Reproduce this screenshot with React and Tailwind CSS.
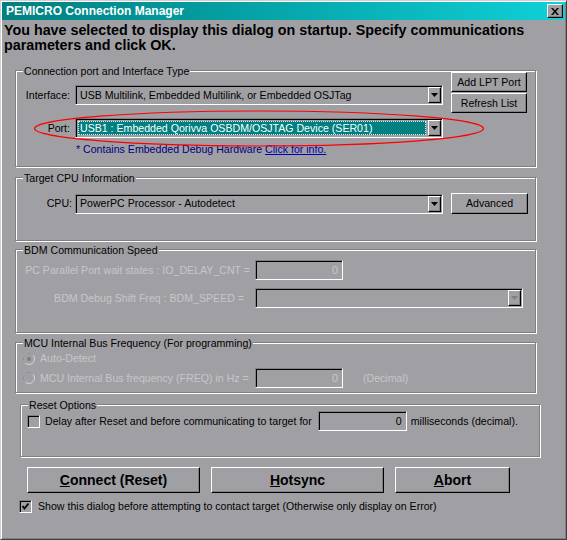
import React from "react";

const RAISED =
  "border border-t-white border-l-white border-r-black border-b-black shadow-[inset_-1px_-1px_0_#808080]";
const SUNKEN =
  "border border-t-[#808080] border-l-[#808080] border-r-white border-b-white shadow-[inset_1px_1px_0_#000]";
const FRAME =
  "border border-[#808080] shadow-[inset_1px_1px_0_#fff,1px_1px_0_#fff]";
const DIS = "text-[#c6c6ca]";

const Arrow = ({ disabled }) => (
  <svg width="7" height="4" viewBox="0 0 7 4">
    <path d="M0 0h7L3.5 4z" fill={disabled ? "#808080" : "#000"} />
  </svg>
);

const DropBtn = ({ disabled }) => (
  <div
    className={`w-[13px] h-full flex items-center justify-center bg-[#a0a0a4] ${RAISED}`}
  >
    <Arrow disabled={disabled} />
  </div>
);

const Combo = ({ className = "", children, selected, disabled }) => (
  <div className={`flex h-[20px] p-[1px] ${SUNKEN} ${className}`}>
    <div className="flex-1 min-w-0 flex items-center pl-[1px] pr-[2px]">
      {selected ? (
        <div className="flex-1 h-[14px] flex items-center bg-[#008080] text-white border border-dotted border-[#e8e8e8] pl-[1px] whitespace-nowrap">
          {children}
        </div>
      ) : (
        <span className="pl-[2px] whitespace-nowrap">{children}</span>
      )}
    </div>
    <DropBtn disabled={disabled} />
  </div>
);

const Field = ({ className = "", children }) => (
  <div
    className={`h-[20px] flex items-center justify-end pr-[4px] ${SUNKEN} ${className}`}
  >
    {children}
  </div>
);

const Legend = ({ children }) => (
  <span className="block w-fit -mt-[6px] ml-[7px] px-[1px] bg-[#a0a0a4] whitespace-nowrap">
    {children}
  </span>
);

const Radio = ({ checked }) => (
  <svg width="12" height="12" viewBox="0 0 12 12" className="shrink-0">
    <circle cx="6" cy="6" r="5.5" fill="none" stroke="#d4d4d8" />
    <path
      d="M9.89 2.11A5.5 5.5 0 0 0 2.11 9.89"
      fill="none"
      stroke="#84848a"
    />
    {checked && <circle cx="6" cy="6" r="2" fill="#7c7c80" />}
  </svg>
);

const Check = ({ checked }) => (
  <div
    className={`w-[13px] h-[13px] shrink-0 flex items-center justify-center ${SUNKEN}`}
  >
    {checked && (
      <svg width="9" height="9" viewBox="0 0 9 9">
        <polyline
          points="1.5,4 3.5,6.5 7.5,1.5"
          fill="none"
          stroke="#000"
          strokeWidth="1.8"
        />
      </svg>
    )}
  </div>
);

const Btn = ({ className = "", children }) => (
  <button
    className={`flex items-center justify-center bg-[#a0a0a4] ${RAISED} ${className}`}
  >
    {children}
  </button>
);

export default function App() {
  return (
    <div className="w-[567px] h-[540px] overflow-hidden">
      <div className="relative w-[567px] h-[540px] bg-[#a0a0a4] border border-t-[#d0d0d0] border-l-[#d0d0d0] border-r-[#404040] border-b-[#404040] shadow-[inset_1px_1px_0_#fff,inset_-1px_-1px_0_#808080] p-[1px] text-[10.6px] leading-[13px] text-black font-['Liberation_Sans',Arial,sans-serif]">
        {/* Title bar */}
        <div className="h-[18px] flex items-center bg-linear-to-r from-[#008080] to-[#10d0d8] pl-[4px] pr-[2px]">
          <span className="flex-1 text-white font-bold text-[12px]">
            PEMICRO Connection Manager
          </span>
          <div
            className={`w-[16px] h-[14px] flex items-center justify-center bg-[#a0a0a4] ${RAISED}`}
          >
            <svg width="8" height="7" viewBox="0 0 8 7">
              <path
                d="M0 0h2l2 2.4L6 0h2L5 3.5 8 7H6L4 4.6 2 7H0l3-3.5z"
                fill="#000"
              />
            </svg>
          </div>
        </div>

        {/* Message */}
        <p className="mt-[3px] pl-[2px] font-bold text-[14.3px] leading-[15px]">
          You have selected to display this dialog on startup. Specify
          communications
          <br />
          parameters and click OK.
        </p>

        {/* Connection port */}
        <div className={`mt-[17px] ml-[13px] w-[521px] h-[97px] flex ${FRAME}`}>
          <div className="flex flex-col">
            <Legend>Connection port and Interface Type</Legend>
            <div className="mt-[7px] flex items-center">
              <span className="w-[54px] text-right">Interface:</span>
              <Combo className="ml-[5px] w-[368px]">
                USB Multilink, Embedded Multilink, or Embedded OSJTag
              </Combo>
            </div>
            <div className="mt-[13px] flex items-center">
              <span className="w-[54px] text-right">Port:</span>
              <Combo className="ml-[5px] w-[368px]" selected>
                USB1 : Embedded Qorivva OSBDM/OSJTAG Device (SER01)
              </Combo>
            </div>
            <p className="mt-[5px] ml-[60px] text-[#000080] whitespace-nowrap">
              * Contains Embedded Debug Hardware{" "}
              <span className="underline text-[#0000b0]">Click for info.</span>
            </p>
          </div>
          <div className="ml-[8px] mt-[1px] flex flex-col gap-[1px]">
            <Btn className="w-[76px] h-[20px]">Add LPT Port</Btn>
            <Btn className="w-[76px] h-[20px]">Refresh List</Btn>
          </div>
        </div>

        {/* Target CPU */}
        <div className={`mt-[10px] ml-[13px] w-[521px] h-[64px] ${FRAME}`}>
          <Legend>Target CPU Information</Legend>
          <div className="mt-[8px] flex items-center">
            <span className="w-[56px] text-right">CPU:</span>
            <Combo className="ml-[3px] w-[368px]">
              PowerPC Processor - Autodetect
            </Combo>
            <Btn className="ml-[8px] w-[77px] h-[21px]">Advanced</Btn>
          </div>
        </div>

        {/* BDM speed */}
        <div className={`mt-[8px] ml-[13px] w-[521px] h-[84px] ${FRAME}`}>
          <Legend>BDM Communication Speed</Legend>
          <div className="mt-[3px] flex items-center">
            <span
              className={`w-[239px] text-right pr-[5px] whitespace-nowrap ${DIS}`}
            >
              PC Parallel Port wait states : IO_DELAY_CNT =
            </span>
            <Field className={`w-[88px] ${DIS}`}>0</Field>
          </div>
          <div className="mt-[8px] flex items-center">
            <span
              className={`w-[239px] text-right pr-[11px] whitespace-nowrap ${DIS}`}
            >
              BDM Debug Shift Freq : BDM_SPEED =
            </span>
            <Combo className="w-[268px]" disabled></Combo>
          </div>
        </div>

        {/* MCU bus frequency */}
        <div className={`mt-[9px] ml-[13px] w-[521px] h-[51px] ${FRAME}`}>
          <Legend>MCU Internal Bus Frequency (For programming)</Legend>
          <div className="mt-[2px] ml-[7px] h-[13px] flex items-center">
            <Radio checked />
            <span className={`ml-[5px] ${DIS}`}>Auto-Detect</span>
          </div>
          <div className="mt-[3px] flex items-center">
            <div className="w-[239px] pl-[7px] flex items-center">
              <Radio />
              <span className={`ml-[5px] whitespace-nowrap ${DIS}`}>
                MCU Internal Bus frequency (FREQ) in Hz =
              </span>
            </div>
            <Field className={`w-[88px] ${DIS}`}>0</Field>
            <span className={`ml-[20px] ${DIS}`}>(Decimal)</span>
          </div>
        </div>

        {/* Reset options */}
        <div className={`mt-[11px] ml-[18px] w-[520px] h-[53px] ${FRAME}`}>
          <Legend>Reset Options</Legend>
          <div className="-mt-[1px] pl-[6px] flex items-center">
            <Check />
            <span className="ml-[5px] whitespace-nowrap">
              Delay after Reset and before communicating to target for
            </span>
            <Field className="ml-[6px] w-[89px]">0</Field>
            <span className="ml-[4px] whitespace-nowrap">
              milliseconds (decimal).
            </span>
          </div>
        </div>

        {/* Buttons */}
        <div className="mt-[10px] ml-[25px] flex gap-[11px] font-bold text-[14px] leading-[16px]">
          <Btn className="w-[173px] h-[26px]">
            <u>C</u>onnect (Reset)
          </Btn>
          <Btn className="w-[173px] h-[26px]">
            <u>H</u>otsync
          </Btn>
          <Btn className="w-[115px] h-[26px]">
            <u>A</u>bort
          </Btn>
        </div>

        <div className="mt-[7px] ml-[17px] flex items-center">
          <Check checked />
          <span className="ml-[6px] whitespace-nowrap">
            Show this dialog before attempting to contact target (Otherwise only
            display on Error)
          </span>
        </div>

        {/* Red highlight drawn round the port row */}
        <svg
          className="absolute left-[32px] top-[108px] pointer-events-none"
          width="452"
          height="40"
          viewBox="0 0 452 40"
        >
          <ellipse
            cx="226"
            cy="19.5"
            rx="224.5"
            ry="17.5"
            fill="none"
            stroke="#ff0000"
            strokeWidth="1.2"
          />
        </svg>
      </div>
    </div>
  );
}
